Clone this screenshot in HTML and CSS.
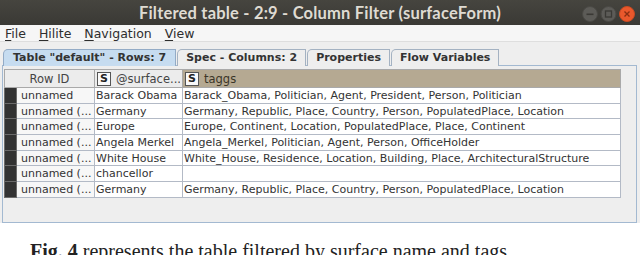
FILE: index.html
```html
<!DOCTYPE html>
<html lang="en">
<head>
  <meta charset="UTF-8" />
  <title>Filtered table</title>
  <link rel="stylesheet" href="styles.css">
</head>
<body>

  <div class="window">
    <div class="titlebar">
      <span></span>
      <span class="title">Filtered table - 2:9 - Column Filter (surfaceForm)</span>
      <span class="winbtns">
        <svg width="54" height="16" viewBox="0 0 54 16">
          <circle cx="8" cy="8" r="7.5" fill="#5c5b57" stroke="#4a4945"/>
          <rect x="4.5" y="7.5" width="7" height="1.6" fill="#3a3935"/>
          <circle cx="26.5" cy="8" r="7.5" fill="#5c5b57" stroke="#4a4945"/>
          <rect x="23.5" y="5" width="6" height="6" fill="none" stroke="#3a3935" stroke-width="1.3"/>
          <circle cx="45" cy="8" r="7.5" fill="#e9582c" stroke="#c94a22"/>
          <path d="M42.5 5.5 L47.5 10.5 M47.5 5.5 L42.5 10.5" stroke="#8a2e12" stroke-width="1.4"/>
        </svg>
      </span>
    </div>

    <div class="menubar">
      <span><u>F</u>ile</span>
      <span><u>H</u>ilite</span>
      <span><u>N</u>avigation</span>
      <span><u>V</u>iew</span>
    </div>

    <div class="tabs">
      <div class="tab active">Table "default" - Rows: 7</div>
      <div class="tab">Spec - Columns: 2</div>
      <div class="tab">Properties</div>
      <div class="tab">Flow Variables</div>
    </div>

    <div class="panel">
      <table class="data">
        <colgroup>
          <col class="c-mark"><col class="c-id"><col class="c-surface"><col class="c-tags">
        </colgroup>
        <thead>
          <tr>
            <th colspan="2" class="h-id">Row ID</th>
            <th class="h-surface"><div class="hcell"><span class="type">S</span>@surface...</div></th>
            <th class="h-tags"><div class="hcell"><span class="type">S</span>taggs</div></th>
          </tr>
        </thead>
        <tbody id="rows"></tbody>
      </table>
    </div>
  </div>

  <p class="caption"><b>Fig. 4</b> represents the table filtered by surface name and tags</p>

  <script>
    const rows = [
      ["unnamed", "Barack Obama", "Barack_Obama, Politician, Agent, President, Person, Politician"],
      ["unnamed (...", "Germany", "Germany, Republic, Place, Country, Person, PopulatedPlace, Location"],
      ["unnamed (...", "Europe", "Europe, Continent, Location, PopulatedPlace, Place, Continent"],
      ["unnamed (...", "Angela Merkel", "Angela_Merkel, Politician, Agent, Person, OfficeHolder"],
      ["unnamed (...", "White House", "White_House, Residence, Location, Building, Place, ArchitecturalStructure"],
      ["unnamed (...", "chancellor", ""],
      ["unnamed (...", "Germany", "Germany, Republic, Place, Country, Person, PopulatedPlace, Location"]
    ];

    const body = document.getElementById("rows");
    rows.forEach(r => {
      const tr = document.createElement("tr");
      tr.innerHTML = `
        <td class="mark"></td>
        <td class="rid">${r[0]}</td>
        <td>${r[1]}</td>
        <td>${r[2]}</td>
      `;
      body.appendChild(tr);
    });
  </script>
</body>
</html>
```

FILE: styles.css
```css
*{margin:0;padding:0;box-sizing:border-box}
body{background:#fff;font-family:"DejaVu Sans",sans-serif;color:#333;width:640px;height:255px;overflow:hidden}
.window{background:#eeeeee}
.titlebar{height:25px;display:grid;grid-template-columns:1fr auto 1fr;align-items:center;background:linear-gradient(#46453f,#3a3935);color:#dfdbd2}
.title{font-family:Lato,sans-serif;font-weight:bold;font-size:16.5px;letter-spacing:0.2px}
.winbtns{justify-self:end;display:flex;padding-right:4px;padding-top:2px}
.menubar{height:17px;background:#f6f6f6;border-bottom:1px solid #dedede;display:flex;gap:13px;padding-left:5px;font-size:12.5px;line-height:17px;color:#2e2e2e}
.menubar u{text-decoration-thickness:1px;text-underline-offset:2px}
.tabs{display:flex;padding:7px 0 0 3px;height:24px;position:relative;z-index:1}
.tab{height:17px;padding:0 8px;border:1px solid #a4b2c2;border-bottom:none;border-radius:5px 0 0 0;background:#eeeeee;font-size:11px;font-weight:bold;line-height:15px;color:#333;margin-right:1px}
.tab.active{background:#c6dcf0;border-color:#93abc6;padding:0 9px}
.panel{margin:-1px 3px 0 2px;height:158px;border:1px solid #a3b9d1;padding:3px 0 0 1px;background:#eeeeee}
.data{border-collapse:collapse;table-layout:fixed;width:616px;font-size:11px}
.c-mark{width:12px}
.c-id{width:78px}
.c-surface{width:88px}
.c-tags{width:438px}
.data th{height:18px;font-weight:normal;font-size:11.5px;text-align:left;border:1px solid #a9a9a9;background:#ececec;color:#444;padding:0 2px;white-space:nowrap;overflow:hidden}
.data th.h-id{text-align:center}
.data th.h-tags{background:#b5a992;color:#3b3528}
.hcell{display:flex;align-items:center;gap:5px;height:16px;overflow:hidden}
.type{flex:none;width:14px;height:14px;border:1px solid #555;background:#fafafa;font-weight:bold;font-size:11px;line-height:12px;text-align:center;color:#222}
.data td{height:15.7px;background:#fff;border:1px solid #b3bac6;padding:0 1px;white-space:nowrap;overflow:hidden;line-height:13px;color:#333}
.data td.mark{background:#333;border-color:#6b6b6b}
.data td.rid{background:#f7f7f7;padding-left:4px}
.caption{font-family:"Liberation Serif",serif;font-size:20px;line-height:22px;color:#222;margin:17px 0 0 30px;white-space:nowrap}
.caption b{font-weight:bold}
```
